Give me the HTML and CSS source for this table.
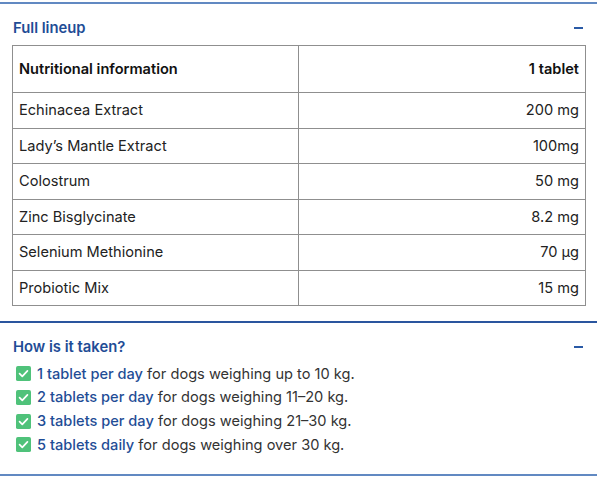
FILE: index.html
```html
<!DOCTYPE html>
<html>
<head>
<meta charset="utf-8">
<link rel="stylesheet" href="styles.css">
</head>
<body>
<div class="page">
  <section class="panel first">
    <div class="panel-head">
      <h2 class="panel-title">Full lineup</h2>
      <span class="toggle"></span>
    </div>
    <table class="nutri">
      <thead>
        <tr><th class="name">Nutritional information</th><th class="val">1 tablet</th></tr>
      </thead>
      <tbody>
        <tr><td class="name">Echinacea Extract</td><td class="val">200 mg</td></tr>
        <tr><td class="name">Lady’s Mantle Extract</td><td class="val">100mg</td></tr>
        <tr><td class="name">Colostrum</td><td class="val">50 mg</td></tr>
        <tr><td class="name">Zinc Bisglycinate</td><td class="val">8.2 mg</td></tr>
        <tr><td class="name">Selenium Methionine</td><td class="val">70 µg</td></tr>
        <tr><td class="name">Probiotic Mix</td><td class="val">15 mg</td></tr>
      </tbody>
    </table>
  </section>
  <section class="panel second">
    <div class="panel-head">
      <h2 class="panel-title">How is it taken?</h2>
      <span class="toggle"></span>
    </div>
    <ul class="dose">
      <li><svg class="check" viewBox="0 0 16 16"><rect x="0" y="0" width="16" height="16" rx="2" fill="#4fc27a"/><path d="M3.8 8.2 L6.7 11 L12.2 5.2" fill="none" stroke="#fff" stroke-width="1.8" stroke-linecap="round" stroke-linejoin="round"/></svg><span><b>1 tablet per day</b> for dogs weighing up to 10 kg.</span></li>
      <li><svg class="check" viewBox="0 0 16 16"><rect x="0" y="0" width="16" height="16" rx="2" fill="#4fc27a"/><path d="M3.8 8.2 L6.7 11 L12.2 5.2" fill="none" stroke="#fff" stroke-width="1.8" stroke-linecap="round" stroke-linejoin="round"/></svg><span><b>2 tablets per day</b> for dogs weighing 11–20 kg.</span></li>
      <li><svg class="check" viewBox="0 0 16 16"><rect x="0" y="0" width="16" height="16" rx="2" fill="#4fc27a"/><path d="M3.8 8.2 L6.7 11 L12.2 5.2" fill="none" stroke="#fff" stroke-width="1.8" stroke-linecap="round" stroke-linejoin="round"/></svg><span><b>3 tablets per day</b> for dogs weighing 21–30 kg.</span></li>
      <li><svg class="check" viewBox="0 0 16 16"><rect x="0" y="0" width="16" height="16" rx="2" fill="#4fc27a"/><path d="M3.8 8.2 L6.7 11 L12.2 5.2" fill="none" stroke="#fff" stroke-width="1.8" stroke-linecap="round" stroke-linejoin="round"/></svg><span><b>5 tablets daily</b> for dogs weighing over 30 kg.</span></li>
    </ul>
  </section>
  <div class="end-line"></div>
</div>
</body>
</html>
```
FILE: styles.css
```css
html, body {
  margin: 0;
  padding: 0;
  background: #fff;
}
body {
  font-family: "Inter", "Noto Sans", sans-serif;
  color: #222;
}
.page {
  width: 597px;
  padding-top: 2px;
}
.panel {
  border-top: 2px solid #6189c2;
  padding: 0 11px 0 12px;
}
.panel.second {
  border-top: 2px solid #2a559e;
  margin-top: 15px;
}
.panel-head {
  display: flex;
  align-items: center;
  justify-content: space-between;
  line-height: 20px;
}
.panel.first .panel-head {
  padding: 14px 0 7px;
}
.panel.second .panel-head {
  padding: 14px 0 5px;
}
.panel-title {
  margin: 0 0 0 1px;
  font-size: 14.8px;
  line-height: 20px;
  font-weight: 600;
  color: #1f4d96;
}
.toggle {
  width: 9px;
  height: 2px;
  background: #2a5aa6;
  margin-right: 3px;
}
.nutri {
  width: 574px;
  border-collapse: collapse;
  font-size: 14.6px;
}
.nutri th, .nutri td {
  border: 1px solid #8f8f8f;
  padding: 0 6px;
  height: 34.5px;
}
.nutri th {
  height: 46px;
  font-weight: 600;
  color: #111;
}
.nutri .name {
  text-align: left;
  width: 273px;
}
.nutri .val {
  text-align: right;
}
.dose {
  list-style: none;
  margin: 0;
  padding: 0 0 17px 4px;
  font-size: 14.6px;
  color: #333;
}
.dose li {
  display: flex;
  align-items: center;
  height: 23.67px;
}
.dose b {
  color: #1f4d96;
  font-weight: 500;
}
.check {
  width: 15px;
  height: 15px;
  margin-right: 6px;
  flex: none;
}
.end-line {
  border-top: 2px solid #6189c2;
}
```
